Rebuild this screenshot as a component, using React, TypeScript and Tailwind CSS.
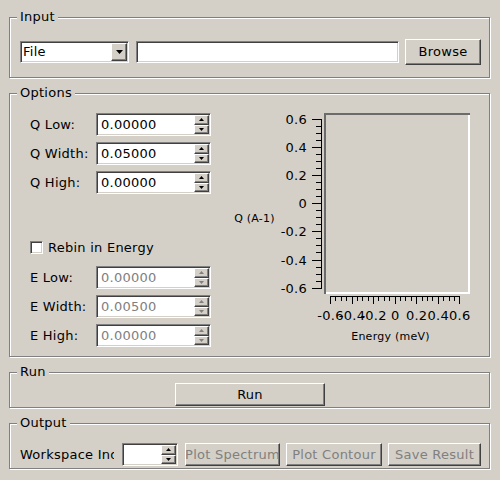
import React from "react";

const sunken =
  "border border-t-[#808080] border-l-[#808080] border-b-white border-r-white shadow-[inset_1px_1px_0_#404040,inset_-1px_-1px_0_#d4d0c8]";
const raised =
  "border border-t-white border-l-white border-b-[#404040] border-r-[#404040] shadow-[inset_-1px_-1px_0_#808080]";

function Group({
  title,
  className,
  children,
}: {
  title: string;
  className: string;
  children: React.ReactNode;
}) {
  return (
    <div
      className={`relative border border-[#808080] shadow-[inset_1px_1px_0_#ffffff,1px_1px_0_#ffffff] ${className}`}
    >
      <span className="absolute -top-[9px] left-[7px] px-[3px] bg-[#d4d0c8] leading-[16px]">
        {title}
      </span>
      {children}
    </div>
  );
}

function Tri({ up, color }: { up?: boolean; color: string }) {
  return (
    <svg width="5" height="3" viewBox="0 0 5 3" className="block">
      <path d={up ? "M2.5 0L5 3H0z" : "M0 0h5L2.5 3z"} fill={color} />
    </svg>
  );
}

function Spin({
  value,
  disabled,
  width,
}: {
  value: string;
  disabled?: boolean;
  width: string;
}) {
  const c = disabled ? "#808080" : "#000000";
  return (
    <div className={`${sunken} bg-white h-[23px] ${width} flex items-stretch p-[1px]`}>
      <span
        className={`flex-1 pl-[3px] flex items-center ${disabled ? "text-[#808080]" : "text-black"}`}
      >
        {value}
      </span>
      <div className="flex flex-col w-[15px]">
        <div className={`flex-1 ${raised} bg-[#d4d0c8] flex items-center justify-center`}>
          <Tri up color={c} />
        </div>
        <div className={`flex-1 ${raised} bg-[#d4d0c8] flex items-center justify-center`}>
          <Tri color={c} />
        </div>
      </div>
    </div>
  );
}

function Row({
  label,
  value,
  disabled,
  className,
}: {
  label: string;
  value: string;
  disabled?: boolean;
  className?: string;
}) {
  return (
    <div className={`flex items-center h-[23px] ${className ?? ""}`}>
      <span className="w-[66px] whitespace-nowrap">{label}</span>
      <Spin value={value} disabled={disabled} width="w-[115px]" />
    </div>
  );
}

function Btn({
  label,
  width,
  disabled,
  className,
}: {
  label: string;
  width: string;
  disabled?: boolean;
  className?: string;
}) {
  return (
    <div
      className={`${raised} bg-[#d4d0c8] h-[23px] ${width} flex items-center justify-center overflow-hidden whitespace-nowrap ${
        disabled ? "text-[#808080]" : "text-black"
      } ${className ?? ""}`}
    >
      <span className="shrink-0">{label}</span>
    </div>
  );
}

function Plot() {
  const yMajor = [0.6, 0.4, 0.2, 0, -0.2, -0.4, -0.6];
  const yLines: React.ReactNode[] = [];
  for (let i = 0; i <= 24; i++) {
    const y = Math.round(14 + (i * 28.1) / 4) + 0.5;
    const major = i % 4 === 0;
    yLines.push(
      <line key={"y" + i} x1={major ? 82 : 86} x2={91.5} y1={y} y2={y} stroke="#000" strokeWidth="1" />
    );
  }
  const xLines: React.ReactNode[] = [];
  for (let i = 0; i <= 24; i++) {
    const x = Math.round(100 + (i * 21.55) / 4) + 0.5;
    const major = i % 4 === 0;
    xLines.push(
      <line key={"x" + i} x1={x} x2={x} y1={191} y2={major ? 199 : 196} stroke="#000" strokeWidth="1" />
    );
  }
  const xLabels = ["-0.6", "-0.4", "-0.2", "0", "0.2", "0.4", "0.6"];
  return (
    <svg
      width="250"
      height="242"
      viewBox="0 0 250 242"
      className="block shrink-0"
      shapeRendering="crispEdges"
      fontFamily="'DejaVu Sans', sans-serif"
    >
      {/* canvas frame */}
      <rect x="94" y="8" width="146" height="2" fill="#6b6b6b" />
      <rect x="94" y="8" width="2" height="181" fill="#6b6b6b" />
      <rect x="238" y="10" width="2" height="179" fill="#ffffff" />
      <rect x="96" y="187" width="144" height="2" fill="#ffffff" />
      {/* y axis */}
      <line x1="91.5" x2="91.5" y1="14" y2="183" stroke="#000" strokeWidth="1" />
      {yLines}
      {yMajor.map((v, i) => (
        <text
          key={"yl" + i}
          x="77"
          y={Math.round(14 + i * 28.1) + 5}
          fontSize="13"
          textAnchor="end"
          fill="#000"
        >
          {v === 0 ? "0" : v.toFixed(1)}
        </text>
      ))}
      {/* x axis */}
      <line x1="100" x2="230" y1="191.5" y2="191.5" stroke="#000" strokeWidth="1" />
      {xLines}
      {xLabels.map((t, i) => (
        <text
          key={"xl" + i}
          x={100.5 + i * 21.55}
          y="215"
          fontSize="13"
          textAnchor="middle"
          fill="#000"
        >
          {t}
        </text>
      ))}
      <text x="160.5" y="235" fontSize="11" textAnchor="middle" fill="#000">
        Energy (meV)
      </text>
      <text x="24.5" y="117" fontSize="11" textAnchor="middle" fill="#000">
        Q (A-1)
      </text>
    </svg>
  );
}

export default function App() {
  return (
    <div className="w-[500px] h-[480px] bg-[#d4d0c8] font-['DejaVu_Sans',sans-serif] text-[13px] leading-[16px] tracking-[0.25px] text-black pt-[17px] pl-[9px] pr-[10px] flex flex-col gap-[15px] overflow-hidden">
      {/* Input */}
      <Group title="Input" className="h-[61px] pt-[21px] pl-[10px] pr-[8px] flex items-start">
        <div className="flex items-center h-[26px]">
          <div className={`${sunken} bg-white w-[109px] h-[22px] flex items-stretch p-[1px]`}>
            <span className="flex-1 pl-[1px] flex items-center">File</span>
            <div className={`${raised} bg-[#d4d0c8] w-[16px] flex items-center justify-center`}>
              <svg width="7" height="4" viewBox="0 0 7 4" className="block">
                <path d="M0 0h7L3.5 4z" fill="#000" />
              </svg>
            </div>
          </div>
          <div className={`${sunken} bg-white w-[263px] h-[22px] ml-[7px]`} />
          <div
            className={`${raised} bg-[#d4d0c8] w-[76px] h-[26px] ml-[6px] flex items-center justify-center`}
          >
            Browse
          </div>
        </div>
      </Group>

      {/* Options */}
      <Group title="Options" className="h-[264px] pt-[11px] pl-[20px] pr-[9px] flex items-start">
        <div className="w-[200px] pt-[8px] flex flex-col">
          <Row label="Q Low:" value="0.00000" />
          <Row label="Q Width:" value="0.05000" className="mt-[6px]" />
          <Row label="Q High:" value="0.00000" className="mt-[6px]" />
          <div className="flex items-center h-[23px] mt-[42px]">
            <div className={`${sunken} bg-white w-[13px] h-[13px]`} />
            <span className="ml-[5px]">Rebin in Energy</span>
          </div>
          <Row label="E Low:" value="0.00000" disabled className="mt-[7px]" />
          <Row label="E Width:" value="0.00500" disabled className="mt-[6px]" />
          <Row label="E High:" value="0.00000" disabled className="mt-[6px]" />
        </div>
        <Plot />
      </Group>

      {/* Run */}
      <Group title="Run" className="h-[36px] pt-[10px] pl-[1px] flex justify-center items-start">
        <Btn label="Run" width="w-[150px]" />
      </Group>

      {/* Output */}
      <Group title="Output" className="h-[46px] pt-[19px] pl-[10px] flex items-start">
        <span className="w-[94px] h-[23px] overflow-hidden whitespace-nowrap flex items-center">
          Workspace Index
        </span>
        <div className="ml-[8px]">
          <Spin value="" width="w-[56px]" />
        </div>
        <Btn label="Plot Spectrum" width="w-[95px]" disabled className="ml-[7px]" />
        <Btn label="Plot Contour" width="w-[96px]" disabled className="ml-[6px]" />
        <Btn label="Save Result" width="w-[93px]" disabled className="ml-[6px]" />
      </Group>
    </div>
  );
}
